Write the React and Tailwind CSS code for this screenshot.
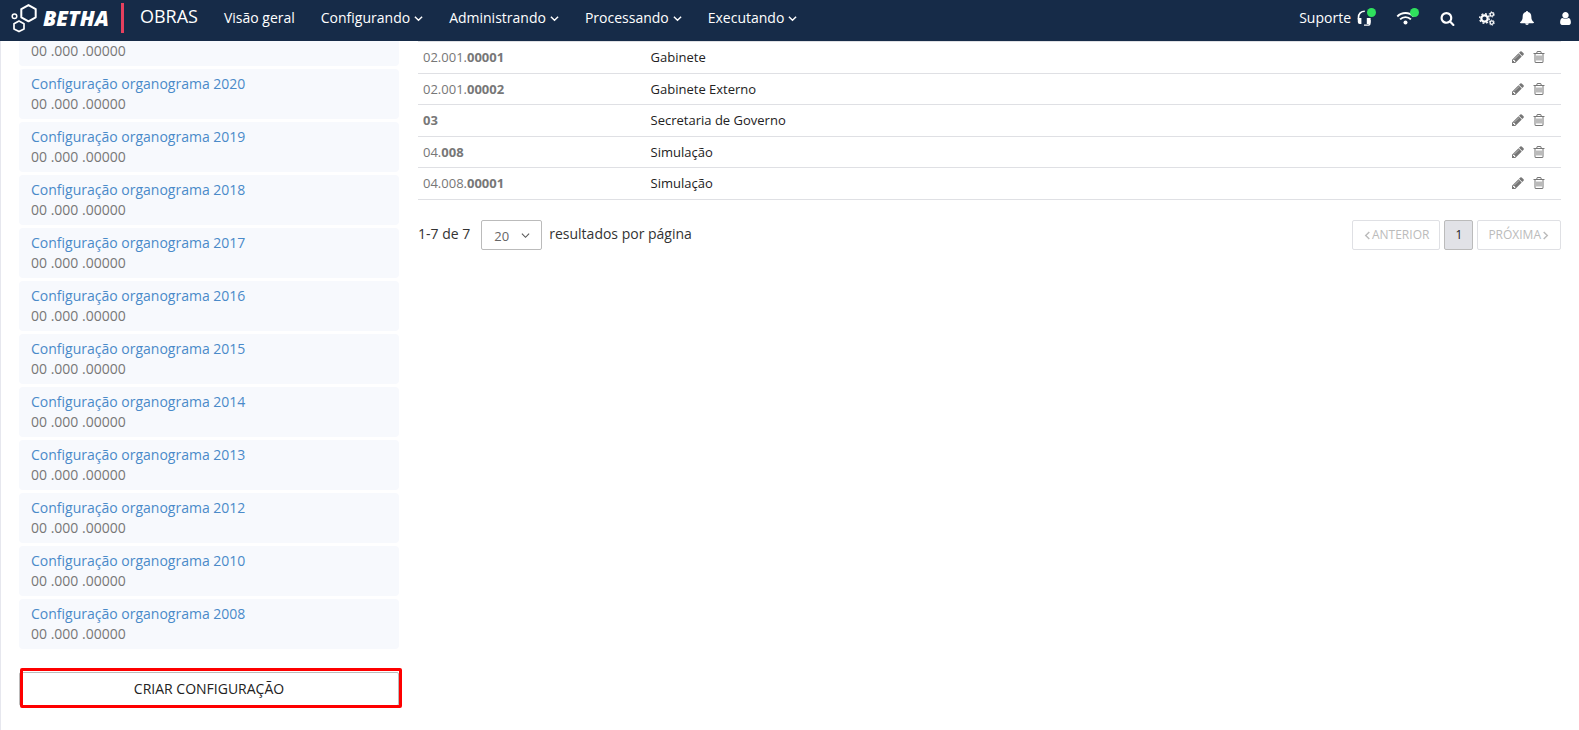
import React from 'react';

const years = [2020, 2019, 2018, 2017, 2016, 2015, 2014, 2013, 2012, 2010, 2008];

const rows = [
  { prefix: '02.001.', level: '00001', name: 'Gabinete' },
  { prefix: '02.001.', level: '00002', name: 'Gabinete Externo' },
  { prefix: '', level: '03', name: 'Secretaria de Governo' },
  { prefix: '04.', level: '008', name: 'Simulação' },
  { prefix: '04.008.', level: '00001', name: 'Simulação' },
];

function Glyph({ d, className }) {
  return (
    <svg viewBox="0 0 1792 1792" fill="currentColor" className={className} aria-hidden="true">
      <path d={d} />
    </svg>
  );
}

const PENCIL =
  'M491 1536l91-91-235-235-91 91v107h128v128h107zM1014 608q0-22-22-22-10 0-17 7l-542 542q-7 7-7 17 0 22 22 22 10 0 17-7l542-542q7-7 7-17zM960 416l416 416-832 832h-416v-416zM1643 512q0 53-37 90l-166 166-416-416 166-165q36-38 90-38 53 0 91 38l235 234q37 39 37 91z';
const TRASH =
  'M704 736v576q0 14-9 23t-23 9h-64q-14 0-23-9t-9-23v-576q0-14 9-23t23-9h64q14 0 23 9t9 23zm256 0v576q0 14-9 23t-23 9h-64q-14 0-23-9t-9-23v-576q0-14 9-23t23-9h64q14 0 23 9t9 23zm256 0v576q0 14-9 23t-23 9h-64q-14 0-23-9t-9-23v-576q0-14 9-23t23-9h64q14 0 23 9t9 23zm128 724v-948h-896v948q0 22 7 40.5t14.5 27 10.5 8.5h832q3 0 10.5-8.5t14.5-27 7-40.5zm-672-1076h448l-48-117q-7-9-17-11h-317q-10 2-17 11zm928 32v64q0 14-9 23t-23 9h-96v948q0 83-47 143.5t-113 60.5h-832q-66 0-113-58.5t-47-141.5v-952h-96q-14 0-23-9t-9-23v-64q0-14 9-23t23-9h309l70-167q15-37 54-63t79-26h320q40 0 79 26t54 63l70 167h309q14 0 23 9t9 23z';
const SEARCH =
  'M1216 832q0-185-131.5-316.5t-316.5-131.5-316.5 131.5-131.5 316.5 131.5 316.5 316.5 131.5 316.5-131.5 131.5-316.5zm512 832q0 52-38 90t-90 38q-54 0-90-38l-343-342q-179 124-399 124-143 0-273.5-55.5t-225-150-150-225-55.5-273.5 55.5-273.5 150-225 225-150 273.5-55.5 273.5 55.5 225 150 150 225 55.5 273.5q0 220-124 399l343 343q37 37 37 90z';
const USER =
  'M1536 1399q0 109-62.5 187t-150.5 78h-854q-88 0-150.5-78t-62.5-187q0-85 8.5-160.5t31.5-152 58.5-131 94-89 134.5-34.5q131 128 313 128t313-128q76 0 134.5 34.5t94 89 58.5 131 31.5 152 8.5 160.5zm-256-887q0 159-112.5 271.5t-271.5 112.5-271.5-112.5-112.5-271.5 112.5-271.5 271.5-112.5 271.5 112.5 112.5 271.5z';

function Chevron({ d, className, weight = 1.6 }) {
  return (
    <svg viewBox="0 0 10 10" fill="none" stroke="currentColor" strokeWidth={weight} className={className} aria-hidden="true">
      <path d={d} />
    </svg>
  );
}
const DOWN = 'M1 3l4 4 4-4';
const LEFT = 'M7 1L3 5l4 4';
const RIGHT = 'M3 1l4 4-4 4';

function Cogs() {
  return (
    <svg viewBox="0 0 16 15" fill="none" stroke="currentColor" className="h-[15px] w-4" aria-hidden="true">
      <circle cx="5.5" cy="7.5" r="3.2" strokeWidth="2.2" />
      <circle cx="5.5" cy="7.5" r="4.8" strokeWidth="1.4" strokeDasharray="1.9 1.87" />
      <circle cx="12.8" cy="3.4" r="1.7" strokeWidth="1.3" />
      <circle cx="12.8" cy="3.4" r="2.6" strokeWidth="0.9" strokeDasharray="1.3 1.42" />
      <circle cx="12.8" cy="11.6" r="1.7" strokeWidth="1.3" />
      <circle cx="12.8" cy="11.6" r="2.6" strokeWidth="0.9" strokeDasharray="1.3 1.42" />
    </svg>
  );
}

function Bell() {
  return (
    <svg viewBox="0 0 14 14" fill="currentColor" className="size-[14px]" aria-hidden="true">
      <path d="M7 0c.6 0 1 .4 1 1 2.200.4 3.300 2.200 3.300 4.200 0 3.200.9 4.900 2.700 6.100 0 .5-.4.9-.9.9H.9c-.5 0-.9-.4-.9-.9 1.800-1.200 2.700-2.900 2.700-6.100C2.700 3.200 3.800 1.400 6 1c0-.6.4-1 1-1z" />
      <path d="M5.200 12.200h3.600a1.800 1.800 0 0 1-3.600 0z" />
    </svg>
  );
}

function Logo() {
  return (
    <a href="#inicio" className="flex items-center" aria-label="Betha">
      <svg viewBox="0 0 26 29" fill="none" stroke="#fff" className="h-[29px] w-[26px]" aria-hidden="true">
        <path d="M17.500 1.100l7.200 4v8.200l-7.200 4-7.200-4V5.100z" strokeWidth="2" strokeLinejoin="round" />
        <path d="M8 17l5 2.700v5.200l-5 2.700-5-2.700v-5.200z" strokeWidth="1.700" strokeLinejoin="round" />
        <circle cx="3.500" cy="12.200" r="2.300" strokeWidth="1.500" />
      </svg>
      <span className="ml-1.5 text-[21px] font-extrabold italic leading-7">BETHA</span>
    </a>
  );
}

function StatusDot() {
  return <span className="absolute -right-1 top-0 size-[9px] rounded-full bg-[#2fe05d]" />;
}

function Header() {
  const linkClass = 'flex items-center gap-1 text-[14px] leading-5';
  const iconClass = 'ml-6 flex h-5 w-4 items-center justify-center';
  return (
    <header className="flex h-[41px] items-start bg-[#162b48] pr-2 text-white">
      <div className="flex items-center pl-[11px] pt-[3px]">
        <Logo />
        <span className="ml-3 h-[30px] w-[3px] bg-[#e5405e]" />
        <span className="ml-4 pb-1 text-[18px] leading-6">OBRAS</span>
      </div>
      <nav className="ml-[26px] flex gap-[26px] pt-2">
        <a href="#visao" className={linkClass}>Visão geral</a>
        {['Configurando', 'Administrando', 'Processando', 'Executando'].map((label) => (
          <button key={label} type="button" className={linkClass}>
            {label}
            <Chevron d={DOWN} className="mt-px size-[9px]" />
          </button>
        ))}
      </nav>
      <div className="ml-auto flex items-center pt-2">
        <button type="button" className="relative flex items-center gap-1.5 text-[14px] leading-5">
          Suporte
          <svg viewBox="0 0 15 16" fill="none" stroke="#fff" className="h-4 w-[15px]" aria-hidden="true">
            <path d="M1.500 9.500V7.500C1.500 3.700 4 1.200 7.800 1.200" strokeWidth="1.600" />
            <path d="M0.800 8h3.600v6H2.800a2 2 0 0 1-2-2zM9.800 8h3.800v4a2 2 0 0 1-2 2H9.800z" fill="#fff" stroke="none" />
            <path d="M12.900 10v3.200q0 1.900-2 1.900H7" strokeWidth="1.400" />
          </svg>
          <StatusDot />
        </button>
        <button type="button" aria-label="Conexão" className="relative ml-6 flex h-5 w-[19px] items-center justify-center">
          <svg viewBox="0 0 19 14" fill="none" stroke="#fff" className="h-[14px] w-[19px]" aria-hidden="true">
            <path d="M1.300 5.500a11.500 11.500 0 0 1 16.400 0M4.100 8.400a7.600 7.600 0 0 1 10.800 0" strokeWidth="1.900" />
            <circle cx="9.500" cy="11.500" r="2" fill="#fff" stroke="none" />
          </svg>
          <StatusDot />
        </button>
        <button type="button" aria-label="Pesquisar" className={iconClass}>
          <Glyph d={SEARCH} className="size-[15px]" />
        </button>
        <button type="button" aria-label="Ajustes" className={iconClass}>
          <Cogs />
        </button>
        <button type="button" aria-label="Notificações" className={iconClass}>
          <Bell />
        </button>
        <button type="button" aria-label="Usuário" className="ml-6 flex h-5 w-3 items-center justify-center">
          <Glyph d={USER} className="size-[15px] shrink-0" />
        </button>
      </div>
    </header>
  );
}

function Sidebar() {
  return (
    <aside className="w-[380px] shrink-0">
      <ul className="flex flex-col gap-[3px] text-[14px] leading-5 text-[#777]">
        <li className="rounded-b bg-[#f7f9fd] px-3 pb-[5px]">00 .000 .00000</li>
        {years.map((year) => (
          <li key={year} className="rounded bg-[#f7f9fd] px-3 py-[5px]">
            <a href={`#organograma-${year}`} className="block text-[#4a8ac9]">
              Configuração organograma {year}
            </a>
            <span className="block">00 .000 .00000</span>
          </li>
        ))}
      </ul>
      <div className="relative mt-[23px]">
        <button
          type="button"
          className="h-[34px] w-full rounded-xs border border-[#bbb] bg-white text-[14px] leading-5 text-[#222]"
        >
          CRIAR CONFIGURAÇÃO
        </button>
        <span className="pointer-events-none absolute -top-1 -right-[3px] -bottom-0.5 left-px rounded-xs border-[3px] border-[#fe0000]" />
      </div>
    </aside>
  );
}

function Results() {
  const stepClass =
    'flex h-[30px] items-center rounded-xs border border-[#dfe0e4] px-[10px] text-[#bbb]';
  return (
    <section className="min-w-0 flex-1">
      <table className="w-full border-collapse border-t border-[#dfe0e4] text-left text-[13px] leading-5">
        <tbody>
          {rows.map((row) => (
            <tr key={row.prefix + row.level} className="h-[31px] border-b border-[#dfe0e4] odd:h-8">
              <td className="w-1/5 pb-px pl-[5px] text-[#777]">
                {row.prefix}
                <b className="font-bold">{row.level}</b>
              </td>
              <td className="pb-px pl-1 text-[#222]">{row.name}</td>
              <td className="w-24 pb-px pr-[15px]">
                <div className="flex items-center justify-end gap-[7px] text-[#777]">
                  <button type="button" aria-label="Editar">
                    <Glyph d={PENCIL} className="size-[14px]" />
                  </button>
                  <button type="button" aria-label="Excluir">
                    <Glyph d={TRASH} className="size-[14px]" />
                  </button>
                </div>
              </td>
            </tr>
          ))}
        </tbody>
      </table>
      <div className="mt-5 flex items-center justify-between">
        <label className="flex items-center text-[14px] leading-5 text-[#333]">
          <span className="pb-0.5">1-7 de 7</span>
          <span className="relative mr-[7px] ml-[11px] flex items-center">
            <select className="h-[30px] w-[61px] appearance-none rounded-xs border border-[#bbb] bg-white pt-0.5 pl-3 text-[13px] text-[#666]">
              <option>20</option>
            </select>
            <Chevron d={DOWN} weight={1.2} className="pointer-events-none absolute right-3 size-[9px] text-[#555]" />
          </span>
          <span className="pb-0.5">resultados por página</span>
        </label>
        <div className="flex gap-1 text-[12px] leading-4">
          <button type="button" disabled className={stepClass}>
            <Chevron d={LEFT} className="size-[9px]" />
            ANTERIOR
          </button>
          <button type="button" className="h-[30px] w-[29px] rounded-xs border border-[#bbb] bg-[#e1e2e7] text-[#222]">
            1
          </button>
          <button type="button" disabled className={stepClass}>
            PRÓXIMA
            <Chevron d={RIGHT} className="size-[9px]" />
          </button>
        </div>
      </div>
    </section>
  );
}

export default function App() {
  return (
    <div className="flex min-h-screen flex-col bg-white font-['Open_Sans','Noto_Sans',sans-serif]">
      <Header />
      <main className="flex flex-1 gap-[19px] border-l border-[#e6e7ee] pr-[18px] pl-[18px]">
        <Sidebar />
        <Results />
      </main>
    </div>
  );
}
